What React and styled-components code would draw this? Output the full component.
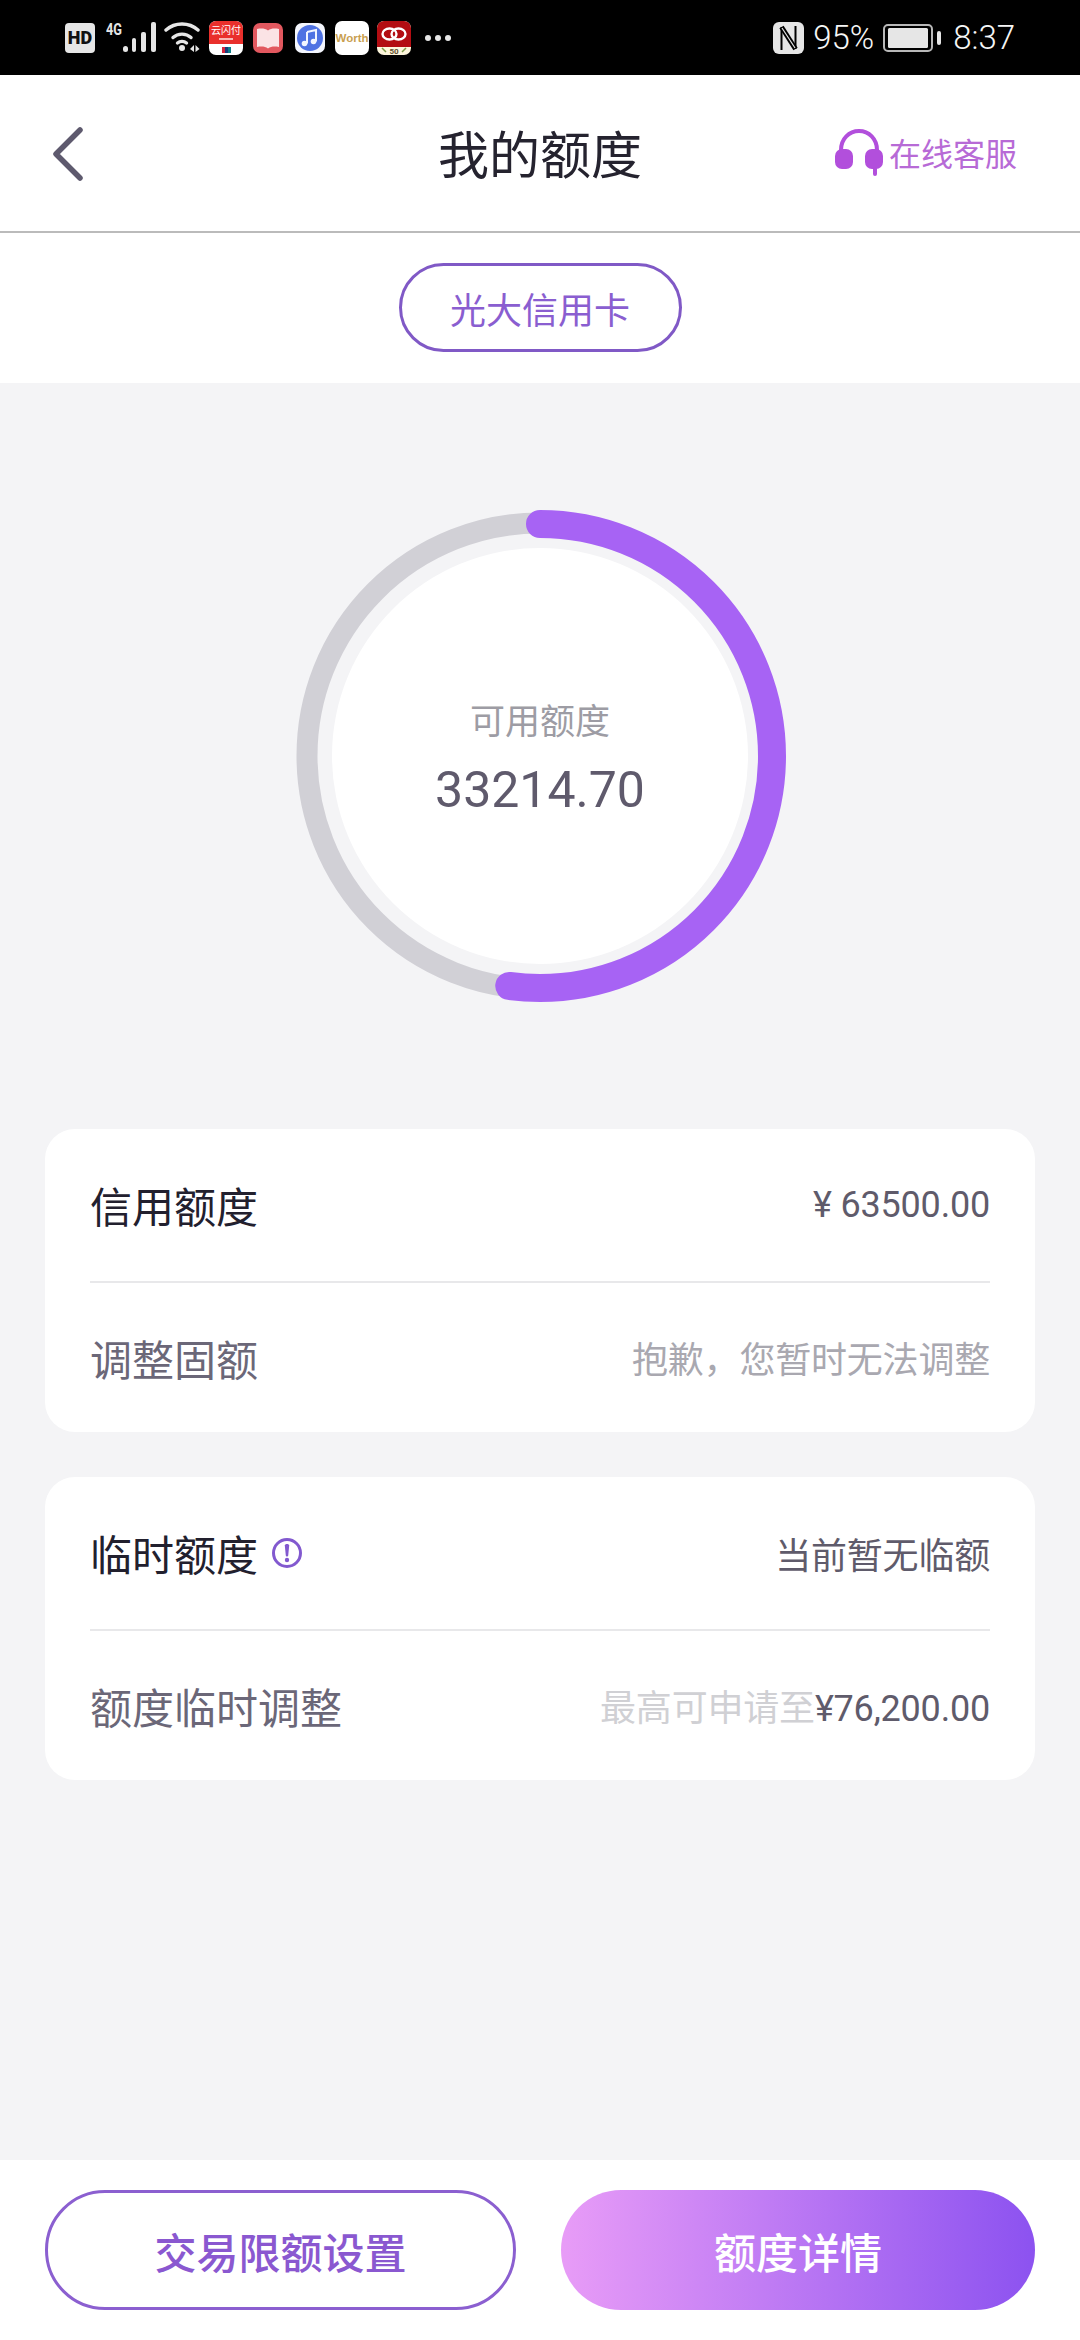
// "My credit limit" screen: status bar, nav header, card tab, limit ring, detail cards, footer actions.

import React from 'react';
import styled, { createGlobalStyle } from 'styled-components';

const GlobalStyle = createGlobalStyle`
    html, body {
        margin: 0;
        padding: 0;
        background-color: #f4f4f6;
    }
    * {
        box-sizing: border-box;
    }
`;

const FONT_STACK = `Roboto, "Noto Sans CJK SC", sans-serif`;

const CREDIT_LIMIT = 63500;
const AVAILABLE = 33214.7;

// Ring geometry, in the svg's own pixels.
const RING_SIZE = 500;
const RING_CENTER = RING_SIZE / 2;
const TRACK_RADIUS = 233;
const ARC_RADIUS = 232;

const SignalIcon = () => (
    <SignalSvg width="50" height="44" viewBox="0 -6 50 44">
        <text x="0" y="13" fontFamily="Roboto, sans-serif" fontWeight="700" fontSize="17" fill="#e6e6e6" textLength="16" lengthAdjust="spacingAndGlyphs">4G</text>
        <rect x="17" y="24" width="5" height="6" rx="2.500" fill="#e6e6e6" />
        <rect x="26" y="16" width="4" height="14" rx="2" fill="#e6e6e6" />
        <rect x="35" y="10" width="5" height="20" rx="2" fill="#e6e6e6" />
        <rect x="45" y="0" width="5" height="30" rx="2" fill="#e6e6e6" />
    </SignalSvg>
);

const WifiIcon = () => (
    <WifiSvg width="36" height="32" viewBox="0 0 36 32" fill="none" stroke="#e6e6e6" strokeWidth="3.400" strokeLinecap="round">
        <path d="M2 8C11 0 25 0 34 8" />
        <path d="M9 15.500C14 11 22 11 27 15.500" />
        <path d="M13.500 21C16 19 20 19 22.500 21" />
        <circle cx="18" cy="26" r="3" fill="#e6e6e6" stroke="none" />
        <path d="M30 23L26 27L30 30ZM31.500 23V30L35.500 27Z" fill="#e6e6e6" stroke="none" />
    </WifiSvg>
);

const UnionPayIcon = () => (
    <AppTile $bg="#fff" $size={34} $gap={9}>
        <svg width="34" height="34" viewBox="0 0 34 34">
            <path d="M0 6a6 6 0 0 1 6-6h22a6 6 0 0 1 6 6v17H0Z" fill="#e9302c" />
            <text x="17" y="13" textAnchor="middle" fontFamily={FONT_STACK} fontSize="10" fill="#fff">云闪付</text>
            <rect x="10" y="17" width="14" height="2" fill="#f7b9b5" />
            <rect x="13" y="26" width="4" height="6" fill="#d7263d" />
            <rect x="16" y="26" width="4" height="6" fill="#1a3e7a" />
            <rect x="19" y="26" width="3" height="6" fill="#0f7f8a" />
        </svg>
    </AppTile>
);

const BookIcon = () => (
    <AppTile $bg="#e2585f" $size={30} $gap={10}>
        <svg width="30" height="30" viewBox="0 0 30 30">
            <path d="M4 6C9 5 12 5.500 15 7.500C18 5.500 21 5 26 6V24C21 23 18 23.500 15 25.500C12 23.500 9 23 4 24Z" fill="#fbe3e5" />
        </svg>
    </AppTile>
);

const MusicIcon = () => (
    <AppTile $bg="#f4f6fd" $size={30} $gap={12}>
        <svg width="30" height="30" viewBox="0 0 30 30">
            <circle cx="15" cy="15" r="13" fill="#4f72e3" />
            <path d="M12 9L21 7V18.500" fill="none" stroke="#f2f5ff" strokeWidth="2" />
            <path d="M12 9V20.500" fill="none" stroke="#f2f5ff" strokeWidth="2" />
            <circle cx="9.500" cy="20.500" r="2.800" fill="#f2f5ff" />
            <circle cx="18.500" cy="18.500" r="2.800" fill="#f2f5ff" />
        </svg>
    </AppTile>
);

const WorthIcon = () => (
    <AppTile $bg="#fff" $size={34} $gap={10}>
        <WorthLabel>Worth</WorthLabel>
    </AppTile>
);

const BankIcon = () => (
    <AppTile $bg="#fdf6dc" $size={34} $gap={8}>
        <svg width="34" height="34" viewBox="0 0 34 34">
            <path d="M0 6a6 6 0 0 1 6-6h22a6 6 0 0 1 6 6v20H0Z" fill="#b30d12" />
            <ellipse cx="12.500" cy="13" rx="7" ry="5.500" fill="none" stroke="#fff" strokeWidth="2.400" />
            <ellipse cx="21.500" cy="13" rx="7" ry="5.500" fill="none" stroke="#fff" strokeWidth="2.400" />
            <path d="M5 27L9 31M29 27L25 31" stroke="#7f9a4a" strokeWidth="1.500" />
            <text x="17" y="33" textAnchor="middle" fontFamily={FONT_STACK} fontSize="8" fontWeight="700" fill="#5f5030">50</text>
        </svg>
    </AppTile>
);

const NfcIcon = () => (
    <svg width="31" height="32" viewBox="0 0 31 32">
        <rect width="31" height="32" rx="6" fill="#e6e6e6" />
        <path d="M8.500 28V5M22.500 27V4" stroke="#000" strokeWidth="2" />
        <path d="M8.500 5L22.500 27" stroke="#000" strokeWidth="5" />
        <path d="M9 6L22 26" stroke="#e6e6e6" strokeWidth="1.200" />
    </svg>
);

const BatteryIcon = () => (
    <svg width="58" height="28" viewBox="0 0 58 28">
        <rect x="1" y="1" width="48" height="26" rx="4" fill="none" stroke="#b8b8b8" strokeWidth="2" />
        <rect x="5" y="4" width="40" height="20" rx="1.500" fill="#e6e6e6" />
        <rect x="54" y="7" width="4" height="14" rx="2" fill="#e6e6e6" />
    </svg>
);

const BackIcon = () => (
    <svg width="31" height="56" viewBox="0 0 31 56" fill="none" stroke="#5e5a6e" strokeWidth="5.500" strokeLinecap="round" strokeLinejoin="round">
        <path d="M27 4L3 28L27 52" />
    </svg>
);

const HeadsetIcon = () => (
    <HeadsetSvg width="48" height="47" viewBox="0 0 48 47">
        <path d="M6 24V21C6 10 14 2 24 2C34 2 42 10 42 21V24" fill="none" stroke="#b24fdc" strokeWidth="4" />
        <rect x="0" y="20" width="18" height="20" rx="7" fill="#b24fdc" />
        <rect x="30" y="20" width="18" height="20" rx="7" fill="#b24fdc" />
        <rect x="38" y="38" width="4" height="9" rx="2" fill="#b24fdc" />
    </HeadsetSvg>
);

const InfoIcon = () => (
    <svg width="32" height="32" viewBox="0 0 32 32">
        <circle cx="16" cy="16" r="13.500" fill="none" stroke="#8259cf" strokeWidth="3" />
        <path d="M13.800 8.500C13.800 6.500 18.200 6.500 18.200 8.500L17.200 18.500C17 19.800 15 19.800 14.800 18.500Z" fill="#8259cf" />
        <circle cx="16" cy="23" r="2.200" fill="#8259cf" />
    </svg>
);

// Progress ring: grey track with the available share drawn clockwise from twelve o'clock.
const LimitRing = ({ available, limit }) => {
    const circumference = 2 * Math.PI * ARC_RADIUS;
    const filled = (available / limit) * circumference - 3;
    return (
        <RingWrap>
            <RingSvg width={RING_SIZE} height={RING_SIZE} viewBox={`0 0 ${RING_SIZE} ${RING_SIZE}`}>
                <circle cx={RING_CENTER} cy={RING_CENTER} r={TRACK_RADIUS} fill="none" stroke="#d1d0d6" strokeWidth="21" />
                <circle
                    cx={RING_CENTER}
                    cy={RING_CENTER}
                    r={ARC_RADIUS}
                    fill="none"
                    stroke="#a763f4"
                    strokeWidth="28"
                    strokeLinecap="round"
                    strokeDasharray={`${filled} ${circumference}`}
                    transform={`rotate(-90 ${RING_CENTER} ${RING_CENTER})`}
                />
            </RingSvg>
            <RingFace>
                <RingLabel>可用额度</RingLabel>
                <RingValue>{available.toFixed(2)}</RingValue>
            </RingFace>
        </RingWrap>
    );
};

const App = () => (
    <Page>
        <GlobalStyle />
        <StatusBar>
            <StatusGroup>
                <BadgeIcon>HD</BadgeIcon>
                <SignalIcon />
                <WifiIcon />
                <UnionPayIcon />
                <BookIcon />
                <MusicIcon />
                <WorthIcon />
                <BankIcon />
                <Dots>
                    <i /><i /><i />
                </Dots>
            </StatusGroup>
            <StatusRight>
                <NfcIcon />
                <StatusText>95%</StatusText>
                <BatteryIcon />
                <ClockText>8:37</ClockText>
            </StatusRight>
        </StatusBar>

        <Header>
            <BackButton><BackIcon /></BackButton>
            <Title>我的额度</Title>
            <ServiceLink>
                <HeadsetIcon />
                在线客服
            </ServiceLink>
        </Header>

        <CardTabs>
            <CardTab>光大信用卡</CardTab>
        </CardTabs>

        <Content>
            <LimitRing available={AVAILABLE} limit={CREDIT_LIMIT} />

            <Panel>
                <Row>
                    <RowLabel>信用额度</RowLabel>
                    <RowValue>¥ 63500.00</RowValue>
                </Row>
                <Row>
                    <RowLabel $muted>调整固额</RowLabel>
                    <RowValue $hint>抱歉，您暂时无法调整</RowValue>
                </Row>
            </Panel>

            <Panel>
                <Row>
                    <RowLabel>临时额度<InfoIcon /></RowLabel>
                    <RowValue>当前暂无临额</RowValue>
                </Row>
                <Row>
                    <RowLabel $muted>额度临时调整</RowLabel>
                    <RowValue><Faint>最高可申请至</Faint>¥76,200.00</RowValue>
                </Row>
            </Panel>
        </Content>

        <Footer>
            <OutlineButton>交易限额设置</OutlineButton>
            <GradientButton>额度详情</GradientButton>
        </Footer>
    </Page>
);

// --- Styled Components ---

const Page = styled.div`
    display: flex;
    flex-direction: column;
    width: 1080px;
    height: 2340px;
    overflow: hidden;
    font-family: ${FONT_STACK};
    background-color: #f4f4f6;
`;

const StatusBar = styled.div`
    display: flex;
    justify-content: space-between;
    align-items: center;
    height: 75px;
    padding: 0 65px;
    background-color: #000;
`;

const StatusGroup = styled.div`
    display: flex;
    align-items: center;
`;

const StatusRight = styled(StatusGroup)`
    gap: 9px;
`;

const StatusText = styled.span`
    font-size: 33px;
    font-weight: 300;
    color: #f6f6f6;
    line-height: 1;
`;

const ClockText = styled(StatusText)`
    margin-left: 3px;
`;

const BadgeIcon = styled.span`
    display: flex;
    align-items: center;
    justify-content: center;
    width: 30px;
    height: 30px;
    border-radius: 4px;
    background-color: #e6e6e6;
    color: #111;
    font-size: 18px;
    font-weight: 900;
`;

const SignalSvg = styled.svg`
    margin-left: 11px;
`;

const WifiSvg = styled.svg`
    margin-left: 8px;
`;

const AppTile = styled.span`
    display: flex;
    align-items: center;
    justify-content: center;
    flex: none;
    width: ${({ $size }) => $size}px;
    height: ${({ $size }) => $size}px;
    margin-left: ${({ $gap }) => $gap}px;
    border-radius: 7px;
    overflow: hidden;
    background-color: ${({ $bg }) => $bg};
`;

const WorthLabel = styled.span`
    font-family: "Liberation Sans", sans-serif;
    font-size: 11.500px;
    font-weight: 700;
    color: #c9a050;
`;

const Dots = styled.span`
    display: flex;
    gap: 4px;
    margin-left: 14px;

    i {
        width: 6px;
        height: 6px;
        border-radius: 50%;
        background-color: #e6e6e6;
    }
`;

const Header = styled.header`
    display: flex;
    align-items: center;
    justify-content: space-between;
    position: relative;
    height: 158px;
    padding: 0 63px 2px 53px;
    background-color: #fff;
    border-bottom: 2px solid #bbbbbb;
`;

const BackButton = styled.span`
    display: flex;
    margin-top: 3px;
`;

const Title = styled.h1`
    position: absolute;
    left: 0;
    right: 0;
    margin: 0;
    text-align: center;
    font-size: 51px;
    font-weight: 400;
    color: #25232f;
    pointer-events: none;
`;

const ServiceLink = styled.span`
    display: flex;
    align-items: center;
    gap: 6px;
    font-size: 32px;
    color: #b76ad6;
`;

const HeadsetSvg = styled.svg`
    flex: none;
`;

const CardTabs = styled.div`
    display: flex;
    justify-content: center;
    padding: 30px 0 31px;
    background-color: #fff;
`;

const CardTab = styled.div`
    display: flex;
    align-items: center;
    justify-content: center;
    width: 283px;
    height: 89px;
    border: 3px solid #8059c6;
    border-radius: 45px;
    font-size: 36px;
    color: #8a5ed0;
`;

const Content = styled.main`
    flex: 1;
    display: flex;
    flex-direction: column;
    gap: 45px;
    padding: 123px 45px 0;
`;

const RingWrap = styled.div`
    position: relative;
    align-self: center;
    width: ${RING_SIZE}px;
    height: ${RING_SIZE}px;
    margin-bottom: 78px;
`;

const RingSvg = styled.svg`
    display: block;
`;

const RingFace = styled.div`
    position: absolute;
    top: 42px;
    left: 42px;
    display: flex;
    flex-direction: column;
    align-items: center;
    justify-content: center;
    gap: 17px;
    width: 416px;
    height: 416px;
    border-radius: 50%;
    background-color: #fff;
`;

const RingLabel = styled.span`
    font-size: 35px;
    color: #9d9ca4;
`;

const RingValue = styled.span`
    font-size: 50px;
    color: #5f5a6c;
`;

const Panel = styled.section`
    display: flex;
    flex-direction: column;
    padding: 0 45px;
    border-radius: 30px;
    background-color: #fff;
`;

const Row = styled.div`
    display: flex;
    align-items: center;
    justify-content: space-between;
    height: 151.500px;

    & + & {
        border-top: 2px solid #e8e8ea;
    }
`;

const RowLabel = styled.span`
    display: flex;
    align-items: center;
    gap: 13px;
    font-size: 42px;
    color: ${({ $muted }) => ($muted ? '#6b6778' : '#22202e')};
`;

const RowValue = styled.span`
    font-size: 36px;
    letter-spacing: -0.200px;
    color: ${({ $hint }) => ($hint ? '#a9a8b0' : '#5f5b6b')};
`;

const Faint = styled.span`
    color: #d0d0d4;
`;

const Footer = styled.footer`
    display: flex;
    gap: 45px;
    height: 180px;
    padding: 30px 45px;
    background-color: #fff;
`;

const ActionButton = styled.button`
    flex: none;
    height: 120px;
    border-radius: 60px;
    font-family: ${FONT_STACK};
    font-size: 42px;
    font-weight: 500;
`;

const OutlineButton = styled(ActionButton)`
    width: 471px;
    border: 3px solid #8b5fd0;
    background-color: #fff;
    color: #8a58d0;
`;

const GradientButton = styled(ActionButton)`
    width: 474px;
    border: none;
    background: linear-gradient(90deg, #e89cf7 0%, #8c52f0 100%);
    color: #fff;
`;

export default App;
